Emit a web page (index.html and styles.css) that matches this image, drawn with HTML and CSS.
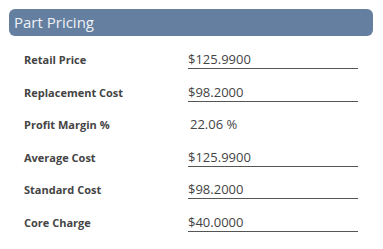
FILE: index.html
```html
<!DOCTYPE html>
<html>
<head>
<meta charset="utf-8">
<link rel="stylesheet" href="styles.css">
</head>
<body>
<div class="panel">
  <div class="header">Part Pricing</div>
  <div class="rows">
    <div class="row"><span class="label">Retail Price</span><span class="field">$125.9900</span></div>
    <div class="row"><span class="label">Replacement Cost</span><span class="field">$98.2000</span></div>
    <div class="row"><span class="label">Profit Margin %</span><span class="plain">22.06 %</span></div>
    <div class="row"><span class="label">Average Cost</span><span class="field">$125.9900</span></div>
    <div class="row"><span class="label">Standard Cost</span><span class="field">$98.2000</span></div>
    <div class="row"><span class="label">Core Charge</span><span class="field">$40.0000</span></div>
  </div>
</div>
</body>
</html>
```

FILE: styles.css
```css
html, body {
  margin: 0;
  padding: 0;
  background: #fff;
}
body {
  font-family: "Open Sans", "Liberation Sans", sans-serif;
  color: #444;
}
.panel {
  padding: 9px 10px 0 9px;
}
.header {
  height: 27px;
  background: #647fa0;
  border-radius: 6px;
  color: #eef1f6;
  font-size: 15px;
  line-height: 26px;
  padding-left: 5px;
}
.rows {
  padding-top: 14px;
}
.row {
  display: grid;
  grid-template-columns: 164px 170px;
  height: 32.6px;
  padding-left: 15px;
  align-items: start;
}
.label {
  font-weight: 700;
  font-size: 11px;
  line-height: 18px;
  padding-top: 1px;
  color: #444;
}
.field {
  font-size: 13px;
  line-height: 18px;
  border-bottom: 1px solid #555;
  color: #444;
}
.plain {
  font-size: 13px;
  line-height: 18px;
  padding-left: 2px;
  color: #444;
}
```
